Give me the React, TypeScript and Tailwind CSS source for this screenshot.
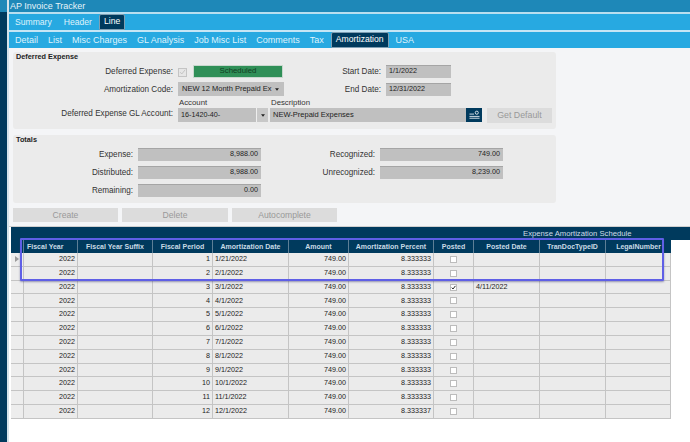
const cols = [
  { n: "Fiscal Year", w: 54 },
  { n: "Fiscal Year Suffix", w: 75 },
  { n: "Fiscal Period", w: 60 },
  { n: "Amortization Date", w: 76 },
  { n: "Amount", w: 60 },
  { n: "Amortization Percent", w: 85 },
  { n: "Posted", w: 40 },
  { n: "Posted Date", w: 66 },
  { n: "TranDocTypeID", w: 66 },
  { n: "LegalNumber", w: 66 },
];

const rows = [
  ["1", "1/21/2022", "8.333333"],
  ["2", "2/1/2022", "8.333333"],
  ["3", "3/1/2022", "8.333333"],
  ["4", "4/1/2022", "8.333333"],
  ["5", "5/1/2022", "8.333333"],
  ["6", "6/1/2022", "8.333333"],
  ["7", "7/1/2022", "8.333333"],
  ["8", "8/1/2022", "8.333333"],
  ["9", "9/1/2022", "8.333333"],
  ["10", "10/1/2022", "8.333333"],
  ["11", "11/1/2022", "8.333333"],
  ["12", "12/1/2022", "8.333337"],
];

function Field({ w, children, right }: { w: string; children?: React.ReactNode; right?: boolean }) {
  return (
    <div className={`${w} h-[13px] bg-[#c0c0c0] border-t border-[#a5a5a5] flex items-center px-[3px] text-[7.2px] text-[#222] ${right ? "justify-end" : ""}`}>
      {children}
    </div>
  );
}

function Label({ w, children }: { w: string; children: React.ReactNode }) {
  return <div className={`${w} shrink-0 pt-[3px] text-right text-[8.15px] text-[#333] leading-none whitespace-nowrap`}>{children}</div>;
}

function Btn({ children, w }: { children: React.ReactNode; w: string }) {
  return <div className={`${w} h-[14px] bg-[#dcdcdc] flex items-center justify-center text-[8.6px] text-[#999]`}>{children}</div>;
}

function Tab({ children, active, small }: { children: React.ReactNode; active?: boolean; small?: boolean }) {
  return active ? (
    <div className="h-[16px] px-[4px] bg-[#003a5d] border border-[#7f9fb3] rounded-t-[2px] text-white text-[8.6px] flex items-center pb-[1px]">{children}</div>
  ) : (
    <div className={`h-[16px] text-[#dff3fc] ${small ? "text-[8.6px]" : "text-[9px]"} flex items-center pt-[1px]`}>{children}</div>
  );
}

export default function App() {
  return (
    <div className="w-[690px] h-[442px] overflow-hidden flex bg-white text-[#333]" style={{ fontFamily: '"Liberation Sans", Arial, sans-serif' }}>
      <div className="w-[7px] bg-[#003a5d] shrink-0 flex flex-col">
        <div className="h-[12px] bg-[#1e88b8]" />
      </div>
      <div className="w-[2px] bg-[#d5e3ea] shrink-0" />
      <div className="flex-1 min-w-0 flex flex-col">
        <div className="h-[12px] bg-[#1e88b8] text-[9px] text-[#e6f3f9] pl-[1px] pt-[1px] flex items-center shrink-0">AP Invoice Tracker</div>
        <div className="h-[2px] bg-[#b9dff0] shrink-0" />
        <div className="h-[16px] bg-[#27a9e1] flex gap-[12px] pl-[6px] shrink-0">
          <Tab small>Summary</Tab>
          <Tab small>Header</Tab>
          <div className="-ml-[5px]"><Tab active>Line</Tab></div>
        </div>
        <div className="h-[2px] bg-[#c6e6f5] shrink-0" />
        <div className="h-[16px] bg-[#27a9e1] flex gap-[10px] pl-[6px] shrink-0">
          <Tab>Detail</Tab>
          <Tab>List</Tab>
          <Tab>Misc Charges</Tab>
          <Tab>GL Analysis</Tab>
          <Tab>Job Misc List</Tab>
          <Tab>Comments</Tab>
          <Tab>Tax</Tab>
          <div className="-ml-[3px]"><Tab active>Amortization</Tab></div>
          <div className="-ml-[3px]"><Tab>USA</Tab></div>
        </div>
        <div className="flex-1 bg-[#f4f5f7] flex flex-col min-h-0">
          <div className="w-[543px] mt-[4px] ml-[4px] h-[77px] bg-[#ebebeb] rounded-[3px] pl-[3px] flex flex-col shrink-0">
            <div className="text-[7.3px] font-bold text-[#222] leading-[10px]">Deferred Expense</div>
            <div className="flex items-center mt-[2px] h-[14px]">
              <Label w="w-[157px]">Deferred Expense:</Label>
              <div className="w-[9px] h-[9px] ml-[5px] mt-[2px] bg-[#e6e6e6] border border-[#c4c4c4] flex items-center justify-center">
                <svg viewBox="0 0 10 10" className="w-[8px] h-[8px]"><path d="M1.5 5.2 L4 7.8 L8.8 1.8" fill="none" stroke="#bdbdbd" strokeWidth="1.2" /></svg>
              </div>
              <div className="w-[90px] h-[13px] ml-[6px] bg-[#2f8f57] border border-[#c8d8ce] flex items-center justify-center text-[7.8px] text-[#123d22]">Scheduled</div>
              <Label w="w-[98px]">Start Date:</Label>
              <div className="ml-[5px]"><Field w="w-[65px]">1/1/2022</Field></div>
            </div>
            <div className="flex items-center mt-[4px] h-[14px]">
              <Label w="w-[157px]">Amortization Code:</Label>
              <div className="w-[106px] h-[14px] ml-[5px] bg-[#c0c0c0] flex items-center justify-between pl-[4px] pr-[5px] text-[7.5px] text-[#222]">
                <span className="whitespace-nowrap">NEW 12 Month Prepaid Ex</span>
                <svg viewBox="0 0 6 4" className="w-[4px] h-[3px] shrink-0"><path d="M0 0H6L3 4Z" fill="#222" /></svg>
              </div>
              <Label w="w-[97px]">End Date:</Label>
              <div className="ml-[5px]"><Field w="w-[65px]">12/31/2022</Field></div>
            </div>
            <div className="flex mt-[3px]">
              <div className="w-[157px] pt-[8px] leading-none shrink-0"><Label w="w-full">Deferred Expense GL Account:</Label></div>
              <div className="ml-[5px] w-[90px] shrink-0">
                <div className="text-[7.8px] leading-[8px] h-[8px] text-[#333] pl-[1px]">Account</div>
                <div className="h-[14px] mt-[1px] bg-[#c0c0c0] flex items-center text-[7.2px] text-[#222] pl-[3px]">
                  <span className="flex-1">16-1420-40-</span>
                  <div className="w-[12px] h-full bg-[#c8c8c8] border-l border-[#eee] flex items-center justify-center">
                    <svg viewBox="0 0 6 4" className="w-[4px] h-[3px]"><path d="M0 0H6L3 4Z" fill="#222" /></svg>
                  </div>
                </div>
              </div>
              <div className="ml-[2px] w-[212px] shrink-0">
                <div className="text-[7.8px] leading-[8px] h-[8px] text-[#333] pl-[1px]">Description</div>
                <div className="h-[14px] mt-[1px] bg-[#c0c0c0] flex items-center text-[7.5px] text-[#222] pl-[3px]">
                  <span className="flex-1">NEW-Prepaid Expenses</span>
                  <div className="w-[16px] h-full bg-[#003a5d] flex items-center justify-center">
                    <svg viewBox="0 0 12 10" className="w-[11px] h-[10px]"><rect x="0.5" y="3.5" width="5" height="1" fill="#dfe8ee" /><circle cx="8.5" cy="2.5" r="1.7" fill="none" stroke="#dfe8ee" /><rect x="0.5" y="6" width="11" height="1" fill="#dfe8ee" /><rect x="0.5" y="8" width="11" height="1" fill="#dfe8ee" /></svg>
                  </div>
                </div>
              </div>
              <div className="ml-[5px] mt-[9px] w-[65px] h-[15px] bg-[#dcdcdc] flex items-center justify-center text-[8.8px] text-[#999] shrink-0">Get Default</div>
            </div>
          </div>

          <div className="w-[543px] mt-[6px] ml-[4px] h-[68px] bg-[#ebebeb] rounded-[3px] pl-[3px] flex flex-col shrink-0">
            <div className="text-[7.3px] font-bold text-[#222] leading-[10px]">Totals</div>
            <div className="flex items-center mt-[2px] h-[14px]">
              <Label w="w-[117px]">Expense:</Label>
              <div className="ml-[5px]"><Field w="w-[123px]" right>8,988.00</Field></div>
              <Label w="w-[114px]">Recognized:</Label>
              <div className="ml-[5px]"><Field w="w-[123px]" right>749.00</Field></div>
            </div>
            <div className="flex items-center mt-[4px] h-[14px]">
              <Label w="w-[117px]">Distributed:</Label>
              <div className="ml-[5px]"><Field w="w-[123px]" right>8,988.00</Field></div>
              <Label w="w-[114px]">Unrecognized:</Label>
              <div className="ml-[5px]"><Field w="w-[123px]" right>8,239.00</Field></div>
            </div>
            <div className="flex items-center mt-[4px] h-[14px]">
              <Label w="w-[117px]">Remaining:</Label>
              <div className="ml-[5px]"><Field w="w-[123px]" right>0.00</Field></div>
            </div>
          </div>

          <div className="flex gap-[4px] ml-[4px] mt-[5px] shrink-0">
            <Btn w="w-[105px]">Create</Btn>
            <Btn w="w-[106px]">Delete</Btn>
            <Btn w="w-[105px]">Autocomplete</Btn>
          </div>

          <div className="flex-1 relative mt-[4px] border-t border-[#cfcfcf] min-h-0 bg-white pl-[2px]">
            <div className="h-[13px] bg-[#003a5d] flex items-center pt-[1px] text-[7.7px] text-[#cfdde6]">
              <span className="ml-[512px] whitespace-nowrap">Expense Amortization Schedule</span>
            </div>
            <div className="flex h-[13px] w-[660px] bg-[#003a5d]">
              <div className="w-[12px] shrink-0" />
              {cols.map((c, i) => (
                <div key={c.n} style={{ width: c.w }} className={`shrink-0 border-l border-[#5d7f96] flex items-center pt-[1px] text-[7px] font-bold text-[#c9dbe6] whitespace-nowrap overflow-hidden ${i === 0 ? "justify-start pl-[3px]" : "justify-center"}`}>
                  {c.n}
                </div>
              ))}
            </div>
            {rows.map((r, i) => (
              <div key={r[0]} className="flex h-[13.83px] w-[660px] bg-[#ebebeb] border-b border-[#c4c4c4] text-[7.2px] text-[#222]">
                <div className="w-[12px] shrink-0 bg-[#ededed] flex items-center justify-center">
                  {i === 0 && <svg viewBox="0 0 4 6" className="w-[4px] h-[6px]"><path d="M0 0L4 3L0 6Z" fill="#9a9a9a" /></svg>}
                </div>
                <div style={{ width: 54 }} className="shrink-0 border-l border-[#c4c4c4] flex items-center justify-end pr-[2px]">2022</div>
                <div style={{ width: 75 }} className="shrink-0 border-l border-[#c4c4c4]" />
                <div style={{ width: 60 }} className="shrink-0 border-l border-[#c4c4c4] flex items-center justify-end pr-[2px]">{r[0]}</div>
                <div style={{ width: 76 }} className="shrink-0 border-l border-[#c4c4c4] flex items-center pl-[2px]">{r[1]}</div>
                <div style={{ width: 60 }} className="shrink-0 border-l border-[#c4c4c4] flex items-center justify-end pr-[2px]">749.00</div>
                <div style={{ width: 85 }} className="shrink-0 border-l border-[#c4c4c4] flex items-center justify-end pr-[2px]">{r[2]}</div>
                <div style={{ width: 40 }} className="shrink-0 border-l border-[#c4c4c4] flex items-center justify-center">
                  <div className="w-[7px] h-[7px] bg-white border border-[#bcbcbc] flex items-center justify-center">
                    {i === 2 && <svg viewBox="0 0 10 10" className="w-[7px] h-[7px]"><path d="M1.5 5.2 L4 8 L8.8 1.8" fill="none" stroke="#111" strokeWidth="1.8" /></svg>}
                  </div>
                </div>
                <div style={{ width: 66 }} className="shrink-0 border-l border-[#c4c4c4] flex items-center pl-[2px]">{i === 2 ? "4/11/2022" : ""}</div>
                <div style={{ width: 66 }} className="shrink-0 border-l border-[#c4c4c4]" />
                <div style={{ width: 66 }} className="shrink-0 border-x border-[#c4c4c4]" />
              </div>
            ))}
            <div className="absolute left-[11px] top-[11px] w-[644px] h-[43px] border-2 border-[#5f5fe6] rounded-[1px] shadow-[0_1px_2px_rgba(60,60,120,0.5)]" />
          </div>
        </div>
      </div>
    </div>
  );
}
